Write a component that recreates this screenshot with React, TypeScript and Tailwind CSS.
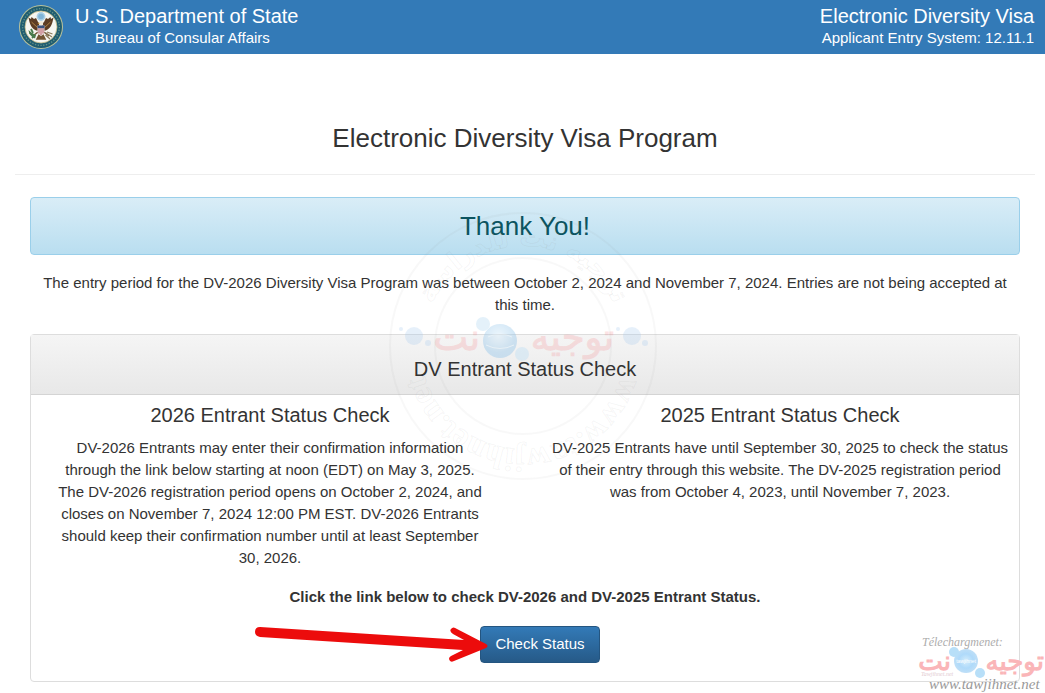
import React from "react";

function Seal() {
  return (
    <svg viewBox="0 0 44 44" className="size-11 shrink-0" role="img" aria-label="Department of State seal">
      <circle cx="22" cy="22" r="22" fill="#b9c29a" />
      <circle cx="22" cy="22" r="21" fill="#1f5c70" />
      <circle cx="22" cy="22" r="18.4" fill="none" stroke="#5f9088" strokeWidth="1.4" strokeDasharray="1.3 1.5" />
      <circle cx="22" cy="22" r="16" fill="#f6f6f1" stroke="#c3b981" strokeWidth="0.8" />
      <circle cx="22" cy="11.5" r="4.4" fill="#a9cfe6" />
      <circle cx="22" cy="11.5" r="2.8" fill="#7fb4d8" />
      <path d="M20.5 26 C16 26 12 23 10.5 17 L9.5 12.5 L12 14 L12.5 12 L15 14 L17 13 L19 17 L21 19 Z" fill="#5c3d24" />
      <path d="M23.5 26 C28 26 32 23 33.5 17 L34.5 12.5 L32 14 L31.5 12 L29 14 L27 13 L25 17 L23 19 Z" fill="#5c3d24" />
      <path d="M12.5 17 L19 23 M31.5 17 L25 23" stroke="#b58a4a" strokeWidth="0.9" />
      <path d="M20 19 Q20 16 22 16 Q24.5 16 24 20 L20 21 Z" fill="#f1ead8" />
      <path d="M20 17.5 L18.5 18.5 L20.5 19 Z" fill="#d9a441" />
      <path d="M19 27 L14 31 M25 27 L30 31 M20 30 L18 34 L26 34 L24 30 Z" stroke="#735535" strokeWidth="1.6" fill="#735535" />
      <path d="M18.5 20.5 H25.5 V26 Q25.5 29 22 31 Q18.5 29 18.5 26 Z" fill="#e9dfe0" />
      <path d="M18.5 20.5 H25.5 V23.2 H18.5 Z" fill="#38537f" />
      <path d="M20 23.2 V28.5 M22 23.2 V30 M24 23.2 V28.5" stroke="#b4545b" strokeWidth="0.9" />
      <path d="M9.5 25 Q10 31 16 33.5 L17 30 L13 28 Z" fill="#477b4c" />
      <path d="M12 24 L14 28 M10.5 28 L14 30 M13 33 L15 31" stroke="#477b4c" strokeWidth="1.8" />
      <path d="M27 28 L33 32 M28 27 L33.5 29 M26.5 30 L31 34" stroke="#8a7a5c" strokeWidth="1.2" />
    </svg>
  );
}

function StampWatermark() {
  return (
    <svg
      viewBox="0 0 270 270"
      className="pointer-events-none absolute top-[211px] left-1/2 size-[270px] -translate-x-1/2"
      aria-hidden="true"
    >
      <defs>
        <radialGradient id="stampGlobe" cx="45%" cy="35%">
          <stop offset="0" stopColor="#d4ebfa" />
          <stop offset="1" stopColor="#93c5ea" />
        </radialGradient>
        <path id="lowerArc" d="M238 135 A103 103 0 0 1 32 135" />
        <path id="upperArc" d="M35 135 A100 100 0 0 1 235 135" />
      </defs>
      <g fill="none" stroke="#808080" strokeOpacity="0.06" strokeWidth="2">
        <circle cx="135" cy="135" r="133" />
        <circle cx="135" cy="135" r="88" />
      </g>
      <g fill="none" stroke="#808080" strokeOpacity="0.08" strokeWidth="1" fontWeight="bold" textAnchor="middle">
        <text fontSize="26" fontFamily="'DejaVu Sans', sans-serif">
          <textPath href="#upperArc" startOffset="50%">
            توجيه نت للدراسة
          </textPath>
        </text>
        <text fontSize="33" fontFamily="'Liberation Serif', serif">
          <textPath href="#lowerArc" startOffset="50%">
            www.tawjihnet.net
          </textPath>
        </text>
      </g>
      <g opacity="0.42">
        <circle cx="112" cy="130" r="17" fill="url(#stampGlobe)" />
        <circle cx="95" cy="113" r="7" fill="#bfe0f5" />
        <circle cx="134" cy="143" r="7" fill="#bfe0f5" />
        <path d="M100 126 Q112 120 124 126 M98 134 Q112 141 126 134" stroke="#d9eefb" fill="none" />
      </g>
      <g fill="#9fc6ef" opacity="0.25">
        <circle cx="26" cy="125" r="9" />
        <circle cx="13" cy="118" r="2" />
        <circle cx="40" cy="132" r="3" />
        <circle cx="244" cy="125" r="9" />
        <circle cx="257" cy="132" r="3" />
        <circle cx="230" cy="118" r="2" />
      </g>
      <g
        fill="#f4777c"
        stroke="#f4777c"
        strokeWidth="1"
        opacity="0.2"
        fontFamily="'DejaVu Sans', sans-serif"
        fontSize="37"
        direction="rtl"
      >
        <text x="226" y="139">
          توجيه
        </text>
        <text x="92" y="139">
          نت
        </text>
      </g>
    </svg>
  );
}

function SiteWatermark() {
  return (
    <svg viewBox="0 0 130 60" className="pointer-events-none absolute right-0 bottom-0 h-[60px] w-[130px]" aria-hidden="true">
      <defs>
        <radialGradient id="siteGlobe" cx="50%" cy="50%">
          <stop offset="0" stopColor="#d5edfb" />
          <stop offset="0.6" stopColor="#afdafa" />
          <stop offset="1" stopColor="#bfdff7" />
        </radialGradient>
      </defs>
      <text x="7" y="13" fill="#adadad" fontSize="12" fontStyle="italic" fontFamily="'Liberation Serif', serif">
        Télechargmenet:
      </text>
      <g
        fill="#fab5b8"
        stroke="#fab5b8"
        strokeWidth="1"
        fontFamily="'DejaVu Sans', sans-serif"
        fontSize="26"
        direction="rtl"
      >
        <text x="129" y="37">
          توجيه
        </text>
        <text x="36" y="37">
          نت
        </text>
      </g>
      <circle cx="51" cy="28" r="12" fill="url(#siteGlobe)" />
      <circle cx="39" cy="19" r="5" fill="#b8dff8" />
      <circle cx="65" cy="40" r="5" fill="#b8dff8" />
      <text x="51" y="30" textAnchor="middle" fill="#ffffff" fontSize="5" fontFamily="'Liberation Sans', sans-serif">
        tawjihnet
      </text>
      <text x="6" y="43" fill="#e3cbd1" fontSize="6" fontStyle="italic" fontFamily="'Liberation Serif', serif">
        Tawjihnet.net
      </text>
      <text x="14" y="56" fill="#999999" fontSize="15" fontStyle="italic" fontFamily="'Liberation Serif', serif">
        www.tawjihnet.net
      </text>
    </svg>
  );
}

function Arrow() {
  return (
    <svg viewBox="0 0 236 40" className="pointer-events-none absolute top-0 right-full -mr-2 h-10 w-[236px]" aria-hidden="true">
      <path
        d="M8 1 L212 14 L201 8 Q197 5 199 3 Q201 0 205 3 L234 18 Q237 20 234 22 L202 35 Q198 37 197 33 Q197 31 199 30 L211 24 L8 11 Q3 10 3 6 Q3 1 8 1 Z"
        fill="#ec0c0c"
      />
    </svg>
  );
}

export default function App() {
  return (
    <div className="relative min-h-screen overflow-hidden bg-white font-['Liberation_Sans',Arial,sans-serif] text-[15px] leading-[22px] text-[#333333]">
      <header className="flex h-[54px] items-center justify-between bg-[#337ab7] pr-[11px] pl-[19px] text-white">
        <div className="flex items-center gap-3">
          <Seal />
          <div>
            <div className="text-[20px]">U.S. Department of State</div>
            <div className="pl-5">Bureau of Consular Affairs</div>
          </div>
        </div>
        <div className="text-right">
          <div className="text-[20px]">Electronic Diversity Visa</div>
          <div>Applicant Entry System: 12.11.1</div>
        </div>
      </header>

      <main className="pt-[68px] pr-[10px] pb-[11px] pl-[15px] text-center">
        <h1 className="border-b border-[#eeeeee] pb-5 text-[26px] leading-8">Electronic Diversity Visa Program</h1>

        <div className="px-[15px] pt-[22px]">
          <div className="rounded border border-[#9acfea] bg-linear-to-b from-[#d9edf7] to-[#b9def0] py-3 text-[26px] leading-8 text-[#0c5460]">
            Thank You!
          </div>
          <p className="mt-[17px]">
            The entry period for the DV-2026 Diversity Visa Program was between October 2, 2024 and November 7, 2024.
            Entries are not being accepted at this time.
          </p>

          <section className="mt-[18px] rounded border border-[#dddddd] pb-[18px]">
            <h2 className="border-b border-[#d4d4d4] bg-linear-to-b from-[#f5f5f5] to-[#e8e8e8] pt-[22px] pb-[13px] text-[20px] leading-6">
              DV Entrant Status Check
            </h2>
            <div className="-mx-4 grid grid-cols-2 pt-2">
              <div className="px-10">
                <h3 className="mb-[10px] text-[20px] leading-6">2026 Entrant Status Check</h3>
                <p>
                  DV-2026 Entrants may enter their confirmation information through the link below starting at noon
                  (EDT) on May 3, 2025. The DV-2026 registration period opens on October 2, 2024, and closes on
                  November 7, 2024 12:00 PM EST. DV-2026 Entrants should keep their confirmation number until at least
                  September 30, 2026.
                </p>
              </div>
              <div className="px-[22px]">
                <h3 className="mb-[10px] text-[20px] leading-6">2025 Entrant Status Check</h3>
                <p>
                  DV-2025 Entrants have until September 30, 2025 to check the status of their entry through this
                  website. The DV-2025 registration period was from October 4, 2023, until November 7, 2023.
                </p>
              </div>
            </div>
            <p className="mt-[17px] font-bold">Click the link below to check DV-2026 and DV-2025 Entrant Status.</p>
            <div className="mt-[18px] flex justify-center pl-[30px]">
              <div className="relative">
                <button
                  type="button"
                  className="block rounded border border-[#245580] bg-linear-to-b from-[#337ab7] to-[#265a88] px-[14px] pt-[6px] pb-[7px] text-[15px] leading-[22px] text-white"
                >
                  Check Status
                </button>
                <Arrow />
              </div>
            </div>
          </section>
        </div>
      </main>

      <StampWatermark />
      <SiteWatermark />
    </div>
  );
}
